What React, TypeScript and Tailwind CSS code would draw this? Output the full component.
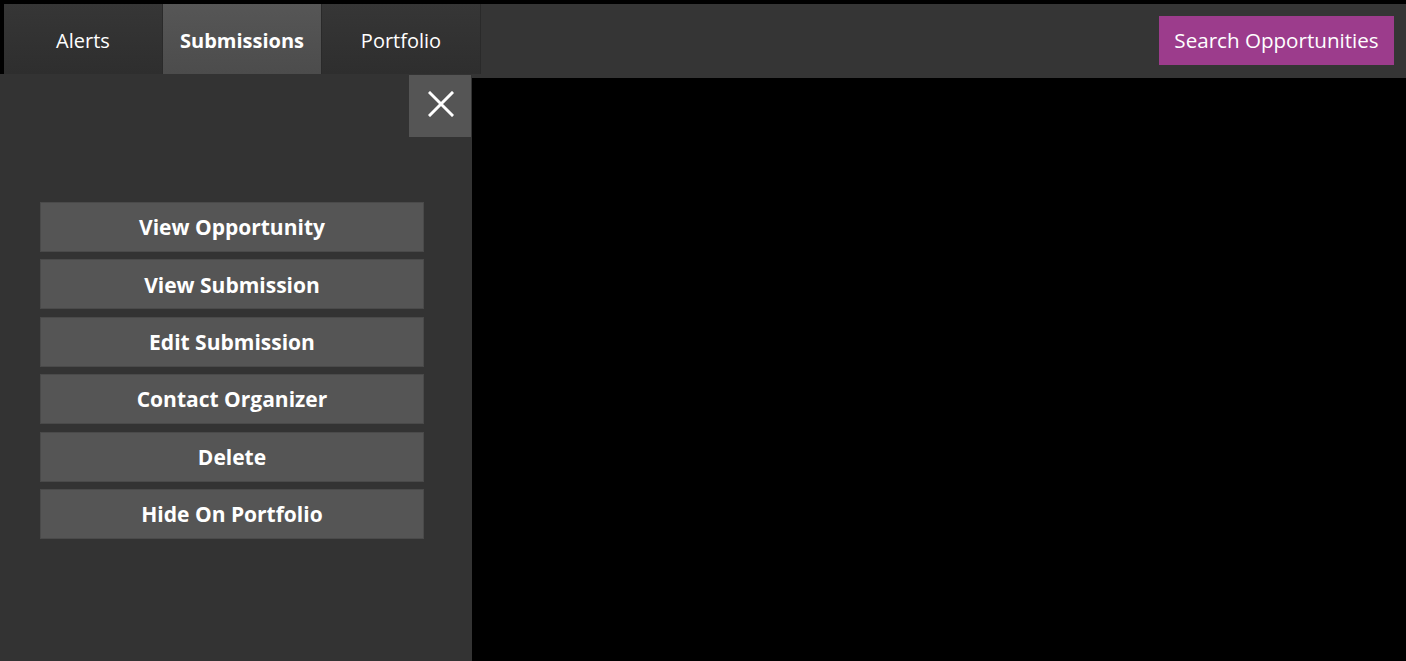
import React from "react";

const font = { fontFamily: '"Open Sans", "Noto Sans", sans-serif' };

export default function App() {
  const actions = [
    "View Opportunity",
    "View Submission",
    "Edit Submission",
    "Contact Organizer",
    "Delete",
    "Hide On Portfolio",
  ];
  return (
    <div className="relative w-[1406px] h-[661px] bg-black overflow-hidden" style={font}>
      <div className="pt-[4px] pl-[4px]">
        <div className="flex h-[74px] bg-[#353535] items-stretch">
          <div className="w-[159px] h-[70px] pt-[4px] flex items-center justify-center text-white text-[20px] bg-gradient-to-b from-[#363636] to-[#2e2e2e] border-r border-[#2a2a2a]">
            Alerts
          </div>
          <div className="w-[159px] h-[70px] pt-[4px] flex items-center justify-center text-white text-[20px] font-bold bg-gradient-to-b from-[#565656] to-[#4c4c4c] border-r border-[#2a2a2a]">
            Submissions
          </div>
          <div className="w-[159px] h-[70px] pt-[4px] flex items-center justify-center text-white text-[20px] bg-gradient-to-b from-[#363636] to-[#2e2e2e] border-r border-[#2a2a2a]">
            Portfolio
          </div>
          <div className="flex-1 flex items-start justify-end pt-[12px] pr-[12px]">
            <button className="w-[235px] h-[49px] bg-[#9c3c8c] text-white text-[20.6px]">
              Search Opportunities
            </button>
          </div>
        </div>
      </div>
      <div className="absolute left-0 top-[74px] w-[472px] bottom-0 bg-[#333333]">
        <div className="flex justify-end">
          <button className="w-[62px] h-[62px] bg-[#555555] flex items-center justify-center mt-[1px] mr-[1px] pb-[4px] pl-[2px]">
            <svg width="26" height="26" viewBox="0 0 26 26">
              <path d="M2 2 L24 24 M24 2 L2 24" stroke="white" strokeWidth="3" strokeLinecap="square" />
            </svg>
          </button>
        </div>
        <div className="mt-[65px] ml-[40px] w-[384px] flex flex-col gap-[7.4px]">
          {actions.map((a) => (
            <div
              key={a}
              className="h-[50px] pt-[2px] bg-[#555555] border border-[#4a4a4a] flex items-center justify-center text-white text-[21px] font-bold"
            >
              {a}
            </div>
          ))}
        </div>
      </div>
    </div>
  );
}
